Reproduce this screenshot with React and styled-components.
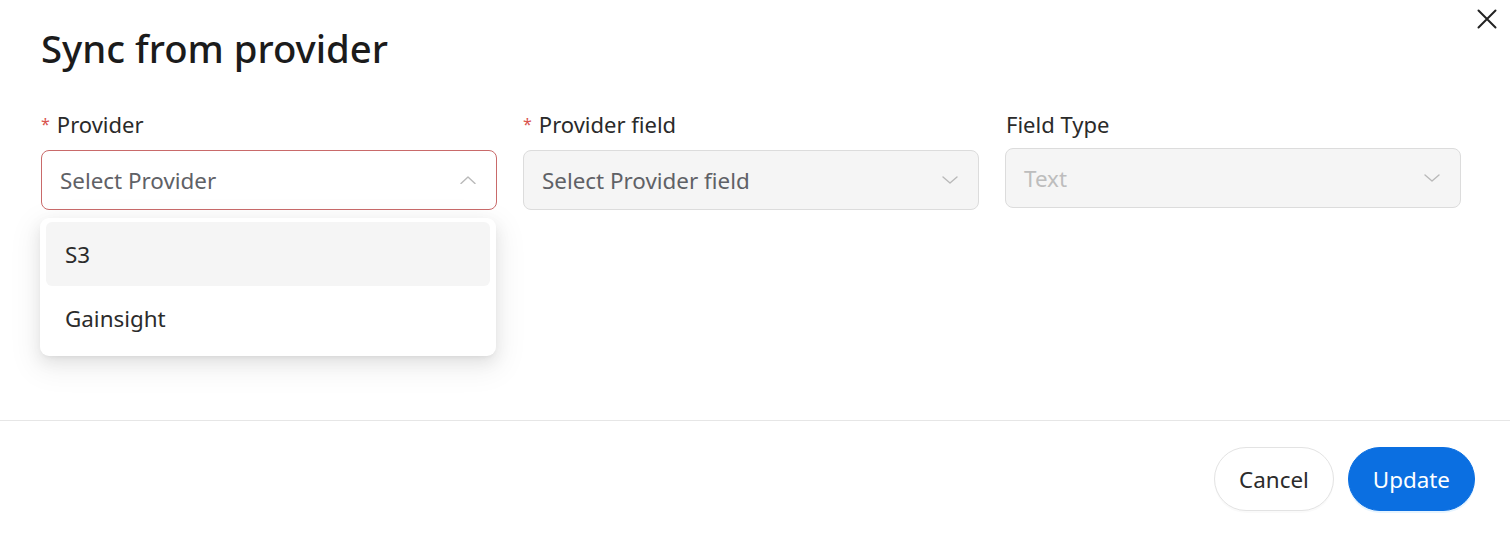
import React from "react";
import styled, { createGlobalStyle } from "styled-components";

const GlobalStyle = createGlobalStyle`
  html, body {
    margin: 0;
    padding: 0;
    background: #ffffff;
  }
  body {
    font-family: "Noto Sans", "Open Sans", sans-serif;
    color: #1f1f1f;
  }
`;

const Modal = styled.div`
  position: relative;
  width: 1510px;
  height: 548px;
  background: #fff;
  display: flex;
  flex-direction: column;
`;

const Close = styled.button`
  position: absolute;
  top: 9px;
  right: 13px;
  width: 20px;
  height: 20px;
  padding: 0;
  border: none;
  background: none;
  display: flex;
  align-items: center;
  justify-content: center;
`;

const Body = styled.div`
  padding: 24px 49px 0 41px;
  height: 421px;
  box-sizing: border-box;
  border-bottom: 1px solid #e6e6e6;
`;

const Title = styled.h1`
  margin: 0;
  font-size: 38.3px;
  font-weight: 500;
  line-height: 48px;
  color: #1b1b1b;
`;

const Fields = styled.div`
  display: grid;
  grid-template-columns: repeat(3, 456px);
  column-gap: 26px;
  margin-top: 38px;
`;

const Field = styled.div`
  display: flex;
  flex-direction: column;
`;

const Label = styled.label`
  display: flex;
  align-items: baseline;
  font-size: 22px;
  line-height: 28px;
  color: #2a2a2a;
  margin-bottom: ${(p) => (p.$required ? "9px" : "10px")};
  margin-left: ${(p) => (p.$required ? "0" : "1px")};
`;

const Star = styled.span`
  color: #d9534f;
  font-size: 16px;
  margin-right: 7px;
  position: relative;
  top: -3px;
`;

const SelectWrap = styled.div`
  position: relative;
`;

const Select = styled.div`
  height: 60px;
  box-sizing: border-box;
  border-radius: 8px;
  border: 1px solid ${(p) => (p.$open ? "#c96a6a" : "#dcdcdc")};
  background: ${(p) => (p.$disabled ? "#f5f5f5" : "#fff")};
  display: flex;
  align-items: center;
  justify-content: space-between;
  padding: 0 20px 0 18px;
  font-size: 22.4px;
  color: ${(p) => (p.$muted ? "#bdbdbd" : "#5f6166")};
`;

const Chevron = ({ up }) => (
  <svg width="16" height="8" viewBox="0 0 16 8" fill="none">
    <path
      d={up ? "M1 7.5 L8 1 L15 7.5" : "M1 1 L8 7 L15 1"}
      stroke="#b9b9b9"
      strokeWidth="1.4"
      strokeLinecap="round"
      strokeLinejoin="round"
    />
  </svg>
);

const Menu = styled.ul`
  position: absolute;
  top: calc(100% + 8px);
  left: -1px;
  width: 456px;
  margin: 0;
  padding: 4px 6px 6px 6px;
  box-sizing: border-box;
  list-style: none;
  background: #fff;
  border-radius: 9px;
  box-shadow: 0 6px 16px rgba(0, 0, 0, 0.08), 0 3px 6px -4px rgba(0, 0, 0, 0.12),
    0 9px 28px 8px rgba(0, 0, 0, 0.05);
  z-index: 2;
`;

const Option = styled.li`
  height: 64px;
  display: flex;
  align-items: center;
  padding: 0 19px;
  border-radius: 6px;
  font-size: 22.4px;
  color: #2b2b2b;
  background: ${(p) => (p.$active ? "#f5f5f5" : "transparent")};
`;

const Footer = styled.div`
  flex: 1;
  display: flex;
  justify-content: flex-end;
  align-items: flex-start;
  gap: 14px;
  padding: 26px 35px 0 0;
`;

const Button = styled.button`
  height: 64px;
  padding: 0 24px;
  border-radius: 32px;
  font-family: inherit;
  font-size: 22.4px;
  border: 1px solid ${(p) => (p.$primary ? "#0b6fe1" : "#e3e3e3")};
  background: ${(p) => (p.$primary ? "#0b6fe1" : "#fff")};
  color: ${(p) => (p.$primary ? "#fff" : "#2b2b2b")};
  box-shadow: ${(p) => (p.$primary ? "0 2px 0 rgba(5, 145, 255, 0.1)" : "0 2px 0 rgba(0,0,0,0.02)")};
`;

export default function App() {
  return (
    <>
      <GlobalStyle />
      <Modal>
        <Close aria-label="Close">
          <svg width="20" height="20" viewBox="0 0 20 20" fill="none">
            <path d="M1.5 1.5 L18.5 18.5 M18.5 1.5 L1.5 18.5" stroke="#222" strokeWidth="2" strokeLinecap="round" />
          </svg>
        </Close>
        <Body>
          <Title>Sync from provider</Title>
          <Fields>
            <Field>
              <Label $required>
                <Star>*</Star>Provider
              </Label>
              <SelectWrap>
                <Select $open>
                  Select Provider
                  <Chevron up />
                </Select>
                <Menu>
                  <Option $active>S3</Option>
                  <Option>Gainsight</Option>
                </Menu>
              </SelectWrap>
            </Field>
            <Field>
              <Label $required>
                <Star>*</Star>Provider field
              </Label>
              <Select $disabled>
                Select Provider field
                <Chevron />
              </Select>
            </Field>
            <Field>
              <Label>Field Type</Label>
              <Select $disabled $muted>
                Text
                <Chevron />
              </Select>
            </Field>
          </Fields>
        </Body>
        <Footer>
          <Button>Cancel</Button>
          <Button $primary>Update</Button>
        </Footer>
      </Modal>
    </>
  );
}
